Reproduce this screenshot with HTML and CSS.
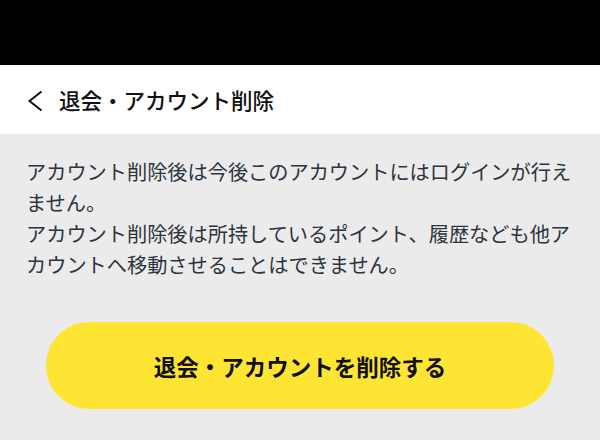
FILE: index.html
```html
<!DOCTYPE html>
<html lang="ja">
<head>
<meta charset="utf-8">
<link rel="stylesheet" href="styles.css">
</head>
<body>
<div class="statusbar"></div>
<header class="header">
  <svg class="back" width="16" height="22" viewBox="0 0 16 22"><path d="M14.5 1.5 L2.5 11 L14.5 20.5" fill="none" stroke="#111" stroke-width="2"/></svg>
  <h1 class="title">退会・アカウント削除</h1>
</header>
<main class="content">
  <p class="notice">アカウント削除後は今後このアカウントにはログインが行えません。<br>アカウント削除後は所持しているポイント、履歴なども他アカウントへ移動させることはできません。</p>
  <div class="actions">
    <button class="delete-btn">退会・アカウントを削除する</button>
  </div>
</main>
</body>
</html>
```
FILE: styles.css
```css
html, body {
  margin: 0;
  padding: 0;
}
body {
  width: 600px;
  height: 440px;
  overflow: hidden;
  background: #ebebeb;
  font-family: "Noto Sans CJK JP", "Noto Sans", sans-serif;
}
.statusbar {
  height: 65px;
  background: #000;
}
.header {
  height: 69px;
  background: #fff;
  display: flex;
  align-items: center;
  padding-left: 27px;
  box-sizing: border-box;
}
.back {
  display: block;
  margin-right: 16px;
  margin-top: 2px;
}
.title {
  margin: 0;
  font-size: 21.5px;
  font-weight: 500;
  color: #111;
  line-height: 1;
}
.content {
  padding: 22px 26px 0 26px;
}
.notice {
  margin: 0;
  font-size: 20.2px;
  line-height: 31px;
  color: #2b3440;
}
.actions {
  margin-top: 42px;
  display: flex;
  justify-content: center;
  padding: 0 20px;
}
.delete-btn {
  width: 508px;
  height: 87px;
  border: none;
  border-radius: 44px;
  background: #ffe533;
  font-family: "Noto Sans CJK JP", "Noto Sans", sans-serif;
  font-size: 22.5px;
  font-weight: 700;
  color: #111;
  padding: 0;
}
```
